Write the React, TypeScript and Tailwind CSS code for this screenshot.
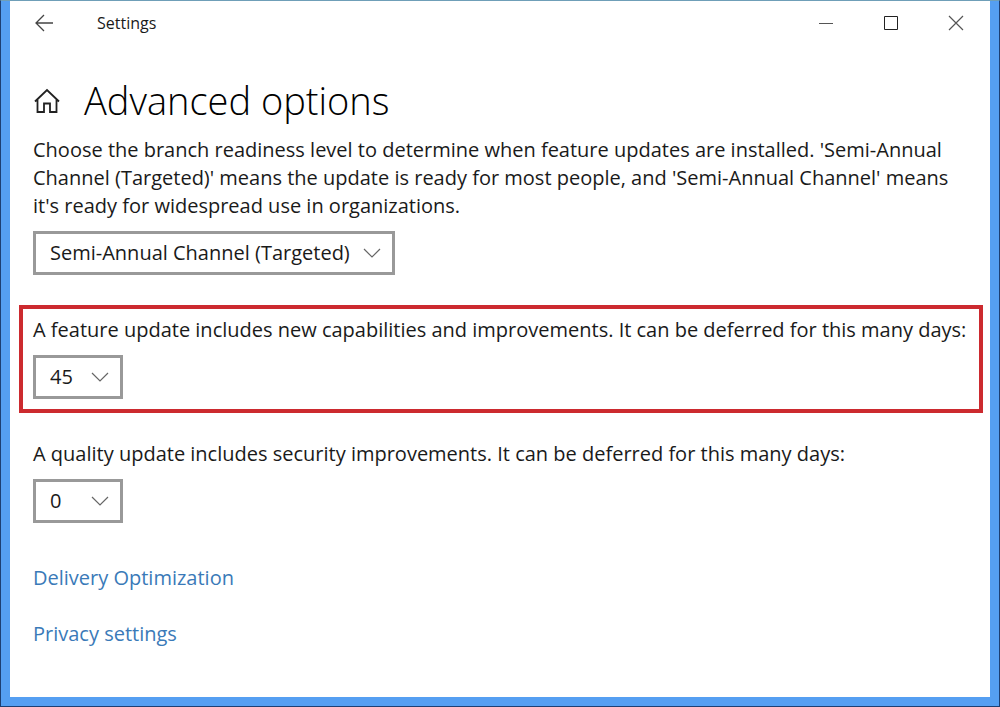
import { useState } from 'react';

type DropdownProps = {
  id: string;
  label?: string;
  options: string[];
  initial: string;
  className: string;
};

function Dropdown({ id, label, options, initial, className }: DropdownProps) {
  const [value, setValue] = useState(initial);

  return (
    <div className={`relative max-w-full ${className}`}>
      <select
        id={id}
        aria-label={label}
        value={value}
        onChange={(e) => setValue(e.target.value)}
        className="h-11 w-full appearance-none border-3 border-[#999999] bg-white pl-[14px] pr-10 text-[20px] leading-7 text-[#1a1a1a]"
      >
        {options.map((option) => (
          <option key={option} value={option}>{option}</option>
        ))}
      </select>
      <svg
        viewBox="0 0 18 10"
        className="pointer-events-none absolute right-[14px] top-[17px] h-[10px] w-[18px]"
        fill="none"
        stroke="#666666"
        strokeWidth="1.2"
      >
        <path d="M1 1 L9 9 L17 1" />
      </svg>
    </div>
  );
}

export default function App() {
  return (
    <div className="flex min-h-screen flex-col border border-[#1d3f73] border-t-[#6f9fb8] bg-[#559ff2] px-[9px] pb-[9px] font-['Open_Sans','Noto_Sans',sans-serif] text-[#1a1a1a]">
      <div className="flex-1 bg-white">
        <header className="flex h-[43px] items-center justify-between pl-6 pr-[26px]">
          <div className="flex items-center gap-[43px]">
            <button type="button" aria-label="Back">
              <svg viewBox="0 0 20 18" className="h-[18px] w-5" fill="none" stroke="#444444" strokeWidth="1.3">
                <path d="M19 9 H2 M10 1 L2 9 L10 17" />
              </svg>
            </button>
            <span className="text-[16px] leading-6">Settings</span>
          </div>
          <div className="flex items-center gap-[49px]">
            <button type="button" aria-label="Minimize">
              <svg viewBox="0 0 16 16" className="h-4 w-4" fill="none" stroke="#555555">
                <path d="M1 8.5 H15" />
              </svg>
            </button>
            <button type="button" aria-label="Maximize">
              <svg viewBox="0 0 16 16" className="h-4 w-4" fill="none" stroke="#222222">
                <path d="M1.5 1.5 H14.5 V14.5 H1.5 Z" />
              </svg>
            </button>
            <button type="button" aria-label="Close">
              <svg viewBox="0 0 16 16" className="h-4 w-4" fill="none" stroke="#555555" strokeWidth="1.2">
                <path d="M1 1 L15 15 M15 1 L1 15" />
              </svg>
            </button>
          </div>
        </header>

        <main className="pt-5 text-[20px] leading-7">
          <div className="flex h-[72px] items-center gap-6 px-6">
            <svg viewBox="0 0 26 26" className="h-[26px] w-[26px]" fill="none" stroke="#222222" strokeWidth="1.8">
              <path d="M1 14.5 L13 3 L25 14.5 M3.5 12.5 V25 H10 V16.5 H16 V25 H22.5 V12.5" />
            </svg>
            <h1 className="text-[38px] font-light leading-[52px] text-black">Advanced options</h1>
          </div>

          <section className="px-[23px]">
            <p>
              Choose the branch readiness level to determine when feature updates are installed. 'Semi-Annual
              Channel (Targeted)' means the update is ready for most people, and 'Semi-Annual Channel' means
              it's ready for widespread use in organizations.
            </p>
            <Dropdown
              id="branch"
              label="Branch readiness level"
              options={['Semi-Annual Channel (Targeted)', 'Semi-Annual Channel']}
              initial="Semi-Annual Channel (Targeted)"
              className="mt-[11px] w-[362px]"
            />
          </section>

          <section className="ml-[9px] mr-[7px] mt-[30px] border-4 border-[#cc2a2f] px-[10px] pb-[10px] pt-[7px]">
            <label htmlFor="feature" className="block">
              A feature update includes new capabilities and improvements. It can be deferred for this many days:
            </label>
            <Dropdown
              id="feature"
              options={['0', '15', '30', '45', '60']}
              initial="45"
              className="mt-[11px] w-[90px]"
            />
          </section>

          <section className="mt-[27px] px-[23px]">
            <label htmlFor="quality" className="block">
              A quality update includes security improvements. It can be deferred for this many days:
            </label>
            <Dropdown
              id="quality"
              options={['0', '5', '10', '15', '30']}
              initial="0"
              className="mt-[11px] w-[90px]"
            />
          </section>

          <nav className="mt-[41px] flex flex-col items-start gap-7 px-[23px] pb-12 text-[#3a7ab8]">
            <a href="#delivery">Delivery Optimization</a>
            <a href="#privacy">Privacy settings</a>
          </nav>
        </main>
      </div>
    </div>
  );
}
